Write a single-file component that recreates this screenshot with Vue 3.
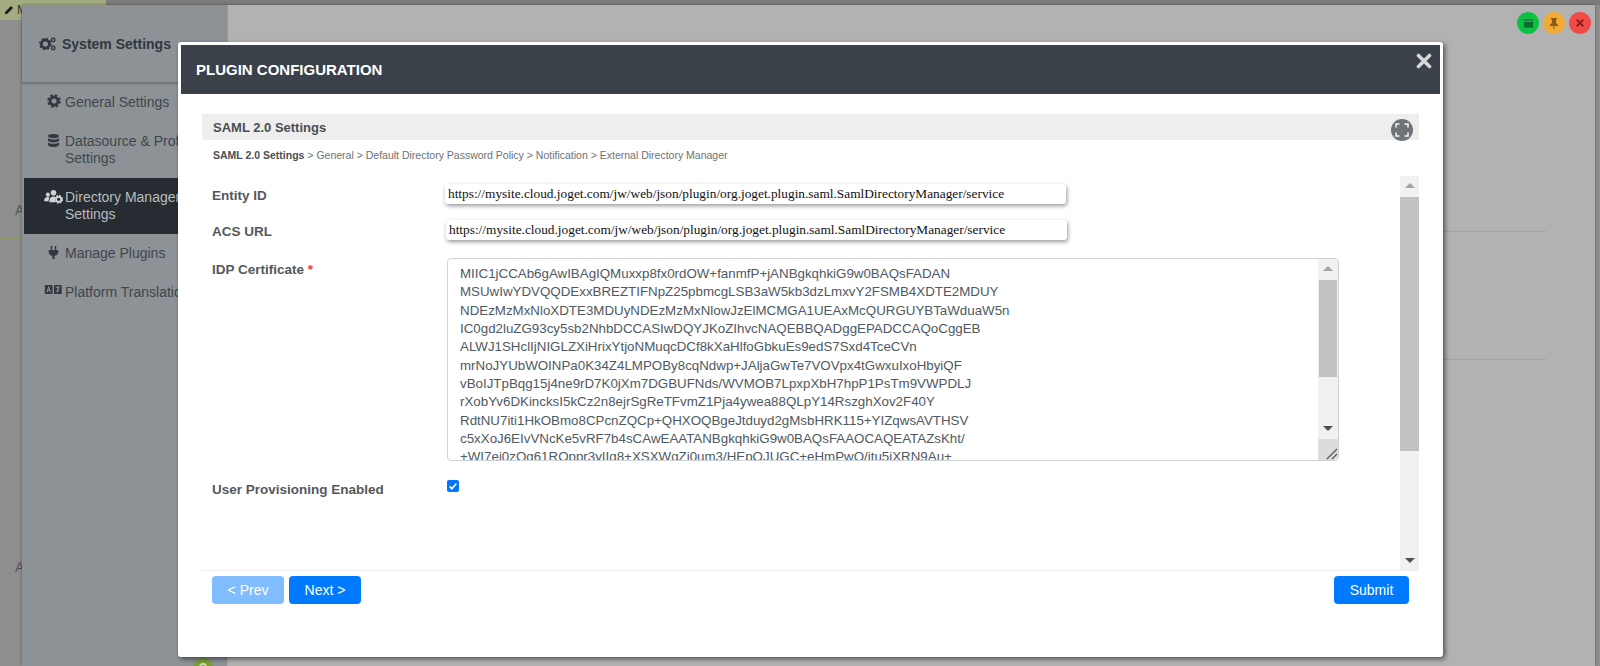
<script setup>
const certLines = [
  'MIIC1jCCAb6gAwIBAgIQMuxxp8fx0rdOW+fanmfP+jANBgkqhkiG9w0BAQsFADAN',
  'MSUwIwYDVQQDExxBREZTIFNpZ25pbmcgLSB3aW5kb3dzLmxvY2FSMB4XDTE2MDUY',
  'NDEzMzMxNloXDTE3MDUyNDEzMzMxNlowJzElMCMGA1UEAxMcQURGUYBTaWduaW5n',
  'IC0gd2luZG93cy5sb2NhbDCCASIwDQYJKoZIhvcNAQEBBQADggEPADCCAQoCggEB',
  'ALWJ1SHclIjNIGLZXiHrixYtjoNMuqcDCf8kXaHlfoGbkuEs9edS7Sxd4TceCVn',
  'mrNoJYUbWOINPa0K34Z4LMPOBy8cqNdwp+JAljaGwTe7VOVpx4tGwxuIxoHbyiQF',
  'vBoIJTpBqg15j4ne9rD7K0jXm7DGBUFNds/WVMOB7LpxpXbH7hpP1PsTm9VWPDLJ',
  'rXobYv6DKincksI5kCz2n8ejrSgReTFvmZ1Pja4ywea88QLpY14RszghXov2F40Y',
  'RdtNU7iti1HkOBmo8CPcnZQCp+QHXOQBgeJtduyd2gMsbHRK115+YIZqwsAVTHSV',
  'c5xXoJ6EIvVNcKe5vRF7b4sCAwEAATANBgkqhkiG9w0BAQsFAAOCAQEATAZsKht/',
  '+WI7ej0zQg61ROppr3yIIg8+XSXWgZj0um3/HEpOJUGC+eHmPwO/jtu5jXRN9Au+'
]
const menu = [
  { label: 'General Settings', icon: 'gear' },
  { label: 'Datasource & Profile Settings', icon: 'db' },
  { label: 'Directory Manager Settings', icon: 'users', active: true },
  { label: 'Manage Plugins', icon: 'plug' },
  { label: 'Platform Translation', icon: 'lang' }
]
const url = 'https://mysite.cloud.joget.com/jw/web/json/plugin/org.joget.plugin.saml.SamlDirectoryManager/service'
</script>

<template>
  <div class="page">
    <div class="top-strip"></div>
    <div class="back-left">
      <div class="chip"><svg viewBox="0 0 12 12" width="10" height="10"><path d="M1 11l.6-3L8.4 1.2l2.4 2.4L4 10.4z" fill="#1b1b1b"/></svg><span>M</span></div>
      <div class="back-a a1">A</div>
      <div class="back-line l1"></div>
      <div class="back-a a2">A</div>
      <div class="back-line l2"></div>
    </div>
    <div class="window">
      <aside class="sidebar">
        <div class="side-title">
          <svg class="side-title-icon" viewBox="0 0 20 16" width="18" height="14">
            <circle cx="7" cy="8" r="4.6" fill="none" stroke="#32383e" stroke-width="3.2"/>
            <circle cx="7" cy="8" r="6.4" fill="none" stroke="#32383e" stroke-width="1.6" stroke-dasharray="2.4 2.6"/>
            <circle cx="16" cy="3.4" r="2" fill="none" stroke="#32383e" stroke-width="1.6"/>
            <circle cx="16" cy="12.6" r="2" fill="none" stroke="#32383e" stroke-width="1.6"/>
          </svg>
          <span>System Settings</span>
        </div>
        <ul class="side-menu">
          <li v-for="m in menu" :key="m.label" :class="['side-item', { active: m.active }]">
            <span class="side-icon">
              <svg v-if="m.icon === 'gear'" viewBox="0 0 16 16" width="14" height="14">
                <circle cx="8" cy="8" r="4.4" fill="none" stroke="#32383e" stroke-width="3"/>
                <circle cx="8" cy="8" r="6.6" fill="none" stroke="#32383e" stroke-width="2.4" stroke-dasharray="3 2.2"/>
              </svg>
              <svg v-else-if="m.icon === 'db'" viewBox="0 0 14 16" width="13" height="15">
                <path d="M7 1C3.5 1 1 2 1 3.2S3.5 5.6 7 5.6s6-1.2 6-2.4S10.500 1 7 1zM1 5.200v2.600c0 1.300 2.500 2.300 6 2.300s6-1 6-2.300V5.200C11.700 6.300 9.500 6.900 7 6.900S2.300 6.300 1 5.200zM1 9.800v2.700C1 13.800 3.500 15 7 15s6-1.200 6-2.500V9.800c-1.300 1.100-3.500 1.700-6 1.700s-4.700-.6-6-1.700z" fill="#32383e"/>
              </svg>
              <svg v-else-if="m.icon === 'users'" viewBox="0 0 20 16" width="19" height="15">
                <circle cx="4" cy="6" r="2.200" fill="#cfd3d6"/>
                <circle cx="10" cy="4" r="3" fill="#cfd3d6"/>
                <path d="M0 13c0-3 1.500-4.500 4-4.500 1 0 1.500.3 2 .7-1 1-1.300 2.300-1.300 3.800zM5.500 14c0-4 1.500-6 4.500-6 1.200 0 2.200.3 3 1-1.600 1-2 3-1 5z" fill="#cfd3d6"/>
                <circle cx="15.500" cy="11" r="2.800" fill="none" stroke="#cfd3d6" stroke-width="2"/>
                <circle cx="15.500" cy="11" r="4.200" fill="none" stroke="#cfd3d6" stroke-width="1.200" stroke-dasharray="1.800 1.500"/>
              </svg>
              <svg v-else-if="m.icon === 'plug'" viewBox="0 0 12 16" width="11" height="15">
                <path d="M3 1h1.600v4H3zM7.400 1H9v4H7.400zM.8 5.400h10.400v2c0 2.300-1.600 3.800-4 4.100V15H4.800v-3.500C2.400 11.200.8 9.700.8 7.400z" fill="#32383e"/>
              </svg>
              <svg v-else viewBox="0 0 20 12" width="19" height="11">
                <rect x="0.500" y="1" width="8.500" height="10" rx="1" fill="#32383e"/>
                <rect x="10.500" y="1" width="8.500" height="10" rx="1" fill="#32383e"/>
                <path d="M2.800 9l2-6 1.900 6M3.500 7h2.600" fill="none" stroke="#9a9ea1" stroke-width="1"/>
                <path d="M12.500 3.500h4.500M14.700 3v6M13 8.500l3.500-3" fill="none" stroke="#9a9ea1" stroke-width="1"/>
              </svg>
            </span>
            <span class="side-label">{{ m.label }}</span>
          </li>
        </ul>
      </aside>
      <main class="main">
        <div class="win-actions">
          <span class="win-btn green">
            <svg viewBox="0 0 12 12" width="11" height="11"><path d="M1 1.500h10v9H1z" fill="#0a6e2c"/><path d="M1 3.500h10" stroke="#4cc46e" stroke-width="1"/></svg>
          </span>
          <span class="win-btn orange">
            <svg viewBox="0 0 12 12" width="12" height="12"><path d="M3 1h6v1.200L8 3v3l2 1.800V9H6.500v3h-1V9H2V7.800L4 6V3L3 2.200z" fill="#8a5a10"/></svg>
          </span>
          <span class="win-btn red">
            <svg viewBox="0 0 12 12" width="10" height="10"><path d="M2 2l8 8M10 2l-8 8" stroke="#8a1a1a" stroke-width="2.200"/></svg>
          </span>
        </div>
        <div class="main-line m1"></div>
        <div class="main-line m2"></div>
      </main>
    </div>
    <div class="help-dot">?</div>

    <section class="modal">
      <header class="modal-head">
        <h1>PLUGIN CONFIGURATION</h1>
        <svg class="modal-close" viewBox="0 0 16 16" width="16" height="16"><path d="M2.500 2.500l11 11M13.500 2.500l-11 11" stroke="#d6d6d6" stroke-width="3.600" stroke-linecap="round"/></svg>
      </header>
      <div class="modal-body">
        <div class="section-head">
          <span>SAML 2.0 Settings</span>
          <span class="fs-btn">
            <svg viewBox="0 0 14 14" width="14" height="14"><path d="M1 4.500V1h3.500M9.500 1H13v3.500M13 9.500V13H9.500M4.500 13H1V9.500" fill="none" stroke="#f2f6fa" stroke-width="1.500"/></svg>
          </span>
        </div>
        <div class="crumbs"><b>SAML 2.0 Settings</b> &gt; General &gt; Default Directory Password Policy &gt; Notification &gt; External Directory Manager</div>
        <div class="scroll-area">
          <div class="form">
            <div class="row row-entity">
              <label>Entity ID</label>
              <div class="url-box">{{ url }}</div>
            </div>
            <div class="row row-acs">
              <label>ACS URL</label>
              <div class="url-box second">{{ url }}</div>
            </div>
            <div class="row row-cert">
              <label>IDP Certificate <em>*</em></label>
              <div class="cert">
                <div class="cert-text">
                  <div v-for="l in certLines" :key="l">{{ l }}</div>
                </div>
                <div class="cert-bar">
                  <span class="arrow up small"></span>
                  <span class="cert-thumb"></span>
                  <span class="arrow down small dn"></span>
                  <span class="grip">
                    <svg viewBox="0 0 16 16" width="16" height="16"><path d="M5 15L15 5M10 15l5-5" stroke="#555" stroke-width="1.200"/></svg>
                  </span>
                </div>
              </div>
            </div>
            <div class="row row-check">
              <label>User Provisioning Enabled</label>
              <span class="check">
                <svg viewBox="0 0 12 12" width="10" height="10"><path d="M2 6.500l2.700 2.700L10 3" fill="none" stroke="#fff" stroke-width="2"/></svg>
              </span>
            </div>
          </div>
          <div class="outer-bar">
            <span class="arrow up"></span>
            <span class="outer-thumb"></span>
            <span class="arrow down dn"></span>
          </div>
        </div>
        <footer class="actions">
          <button class="btn disabled">&lt; Prev</button>
          <button class="btn">Next &gt;</button>
          <button class="btn submit">Submit</button>
        </footer>
      </div>
    </section>
  </div>
</template>

<style>
html, body { margin: 0; padding: 0; overflow: hidden; }
</style>

<style scoped>
.page { position: relative; width: 1600px; height: 666px; background: #8e8e8e; overflow: hidden; font-family: "Liberation Sans", Arial, sans-serif; }
.top-strip { height: 5px; background: #7c7c7c; }
.back-left { position: absolute; left: 0; top: 0; width: 22px; height: 666px; }
.chip { position: absolute; left: 0; top: 0; width: 106px; height: 20px; background: #a3ac80; display: flex; align-items: center; gap: 3px; padding-left: 4px; font-size: 12px; color: #33372a; box-sizing: border-box; }
.back-a { position: absolute; left: 15px; font-size: 14px; color: #55555c; }
.a1 { top: 202px; }
.a2 { top: 559px; }
.back-line { position: absolute; left: 0; width: 22px; height: 1px; background: #8b9a62; }
.l1 { top: 238px; }
.l2 { top: 591px; }
.window { position: absolute; left: 22px; top: 5px; width: 1573px; height: 661px; display: flex; box-shadow: 0 0 3px rgba(0,0,0,.35); }
.sidebar { width: 206px; background: #8d9296; flex: none; border-right: 1px solid #a5a8aa; box-sizing: border-box; }
.side-title { height: 78px; display: flex; align-items: center; gap: 5px; padding-left: 17px; padding-bottom: 0; font-size: 14px; font-weight: 700; color: #32383e; border-bottom: 1px solid #75797c; box-shadow: 0 1px 2px rgba(0,0,0,.25); box-sizing: border-box; white-space: nowrap; }
.side-menu { list-style: none; margin: 0; padding: 0 0 0 2px; }
.side-item { display: flex; align-items: flex-start; padding: 11px 0 11px 0; font-size: 14px; line-height: 17px; color: #40464c; }
.side-item.active { background: #272c32; color: #b9bcbf; }
.side-icon { width: 41px; flex: none; padding-left: 18px; box-sizing: border-box; display: flex; justify-content: center; }
.side-label { width: 130px; }
.main { flex: 1; position: relative; background: #b2b2b2; }
.win-actions { position: absolute; right: 4px; top: 7px; display: flex; gap: 4px; }
.win-btn { width: 22px; height: 22px; border-radius: 50%; display: flex; align-items: center; justify-content: center; }
.green { background: #0bc143; }
.orange { background: #f0ab35; }
.red { background: #f24949; }
.main-line { position: absolute; right: 49px; width: 1300px; height: 1px; background: #a3a3a3; }
.m1 { top: 226px; }
.m2 { top: 354px; }
.help-dot { position: absolute; left: 193px; top: 658px; width: 20px; height: 20px; border-radius: 50%; background: #77a038; color: #c9d8a8; font: 700 14px/20px "Liberation Sans", sans-serif; text-align: center; }
.modal { position: absolute; left: 178px; top: 42px; width: 1265px; height: 615px; box-sizing: border-box; background: #fff; padding: 3px; border-radius: 3px; box-shadow: 2px 2px 5px rgba(0,0,0,.55); }
.modal-head { height: 49px; background: #3a4149; display: flex; align-items: center; justify-content: space-between; padding: 0 8px 0 15px; color: #fff; }
.modal-head h1 { margin: 0; font-size: 15px; font-weight: 700; letter-spacing: 0; }
.modal-close { margin-top: -18px; }
.modal-body { padding: 20px 21px 0 21px; }
.section-head { height: 26px; background: #eeeeee; display: flex; align-items: center; justify-content: space-between; padding: 0 6px 0 11px; font-size: 13px; font-weight: 700; color: #4a4f54; position: relative; }
.fs-btn { position: absolute; right: 6px; top: 5px; width: 22px; height: 22px; border-radius: 50%; background: #6f7478; display: flex; align-items: center; justify-content: center; }
.crumbs { height: 36px; padding: 9px 0 0 11px; box-sizing: border-box; font-size: 10.5px; line-height: 13px; color: #6d7175; }
.crumbs b { color: #4a4f54; }
.scroll-area { height: 394px; display: flex; border-bottom: 1px solid #eeeeee; box-sizing: content-box; }
.form { flex: 1; padding: 8px 0 0 10px; }
.row { display: flex; align-items: flex-start; }
.row label { width: 233px; flex: none; font-size: 13.5px; font-weight: 700; color: #54585c; line-height: 16px; padding-top: 4px; }
.row label em { color: #e53935; font-style: normal; }
.row-entity { height: 36px; }
.row-acs { height: 38px; padding-left: 0; }
.row-acs .url-box { margin-left: 1px; }
.row-cert { height: 218px; }
.url-box { width: 621px; height: 20px; box-sizing: border-box; padding: 0 3px; font: 13.333px/19px "Liberation Serif", serif; color: #111; white-space: nowrap; overflow: hidden; border-radius: 3px; box-shadow: 1px 2px 4px rgba(0,0,0,.4); background: #fff; }
.cert { width: 892px; height: 203px; margin-left: 2px; margin-top: 0; border: 1px solid #ced4da; border-radius: 4px; box-sizing: border-box; display: flex; overflow: hidden; }
.cert-text { flex: 1; padding: 6px 0 0 12px; font-size: 13.333px; line-height: 18.33px; color: #4f5962; overflow: hidden; white-space: nowrap; }
.cert-bar { width: 20px; background: #f1f1f1; position: relative; flex: none; }
.cert-thumb { position: absolute; left: 1px; top: 21px; width: 18px; height: 97px; background: #c1c1c1; }
.grip { position: absolute; left: 0; bottom: 0; width: 20px; height: 21px; background: #dcdcdc; display: flex; align-items: flex-end; justify-content: flex-end; }
.row-check { height: 30px; }
.row-check label { padding-top: 6px; }
.check { margin-left: 2px; margin-top: 4px; width: 12px; height: 12px; background: #0075ff; border-radius: 2px; display: flex; align-items: center; justify-content: center; }
.outer-bar { width: 19px; background: #f1f1f1; position: relative; flex: none; }
.outer-thumb { position: absolute; left: 0; top: 21px; width: 19px; height: 254px; background: #c1c1c1; }
.arrow { position: absolute; left: 5px; width: 0; height: 0; border-left: 5px solid transparent; border-right: 5px solid transparent; }
.arrow.up { top: 7px; border-bottom: 5px solid #a3a3a3; }
.arrow.down { bottom: 7px; border-top: 5px solid #505050; }
.arrow.small.dn { bottom: 29px; }
.actions { height: 44px; position: relative; display: flex; gap: 5px; padding: 5px 10px 0 10px; align-items: flex-start; box-sizing: border-box; }
.btn { width: 72px; height: 28px; border: 0; border-radius: 4px; background: #007bff; color: #fff; font: 14px/28px "Liberation Sans", sans-serif; padding: 0; }
.btn.disabled { background: #80bdff; }
.btn.submit { margin-left: auto; width: 75px; }
</style>
